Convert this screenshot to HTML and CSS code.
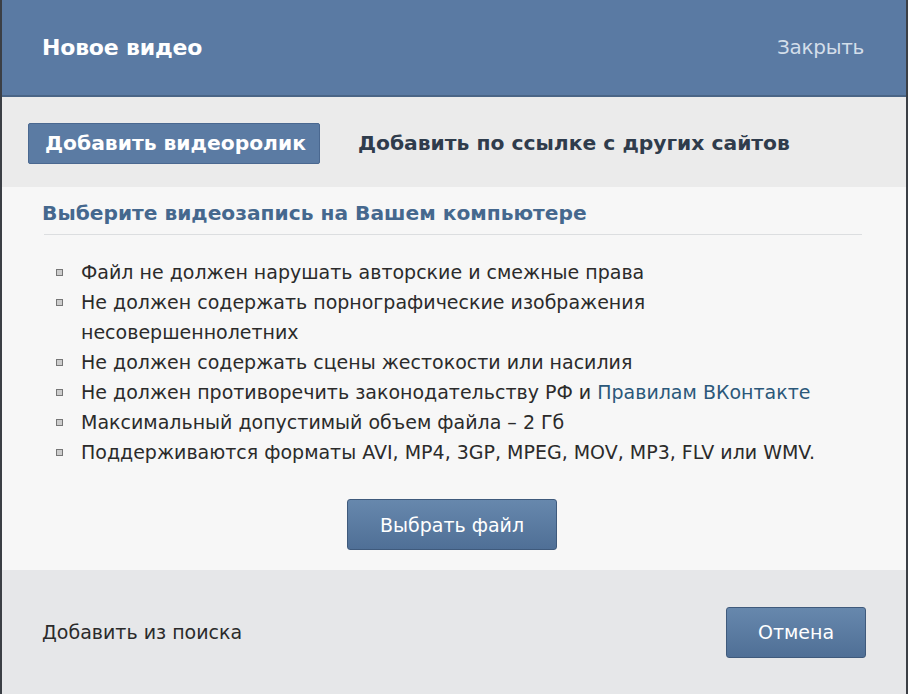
FILE: index.html
```html
<!DOCTYPE html>
<html lang="ru">
<head>
  <meta charset="UTF-8">
  <title>Новое видео</title>
  <link rel="stylesheet" href="styles.css">
</head>
<body>
  <div class="box">
    <div class="box-header">
      <span class="box-title">Новое видео</span>
      <span class="box-close">Закрыть</span>
    </div>

    <div class="tabs">
      <span class="tab active">Добавить видеоролик</span>
      <span class="tab">Добавить по ссылке с других сайтов</span>
    </div>

    <div class="box-body">
      <h3 class="section-title">Выберите видеозапись на Вашем компьютере</h3>
      <ul class="rules">
        <li>Файл не должен нарушать авторские и смежные права</li>
        <li>Не должен содержать порнографические изображения несовершеннолетних</li>
        <li>Не должен содержать сцены жестокости или насилия</li>
        <li>Не должен противоречить законодательству РФ и <a class="link" href="#">Правилам ВКонтакте</a></li>
        <li>Максимальный допустимый объем файла – 2 Гб</li>
        <li>Поддерживаются форматы AVI, MP4, 3GP, MPEG, MOV, MP3, FLV или WMV.</li>
      </ul>
      <div class="upload">
        <button class="button upload-button">Выбрать файл</button>
      </div>
    </div>

    <div class="box-footer">
      <span class="footer-link">Добавить из поиска</span>
      <button class="button cancel-button">Отмена</button>
    </div>
  </div>
</body>
</html>
```

FILE: styles.css
```css
body {
  margin: 0;
  background-color: #fff;
  font-family: "DejaVu Sans", sans-serif;
}

.box {
  width: 904px;
  height: 694px;
  border-left: 2px solid #3b3f45;
  border-right: 2px solid #3b3f45;
  display: flex;
  flex-direction: column;
}

.box-header {
  height: 95px;
  background-color: #5a7aa3;
  border-bottom: 2px solid #4a6586;
  display: flex;
  justify-content: space-between;
  align-items: center;
  padding: 0 42px 0 40px;
}

.box-title {
  color: #fff;
  font-size: 22px;
  font-weight: bold;
  letter-spacing: -0.2px;
}

.box-close {
  color: #d3deea;
  font-size: 20px;
  letter-spacing: -0.3px;
}

.tabs {
  height: 89px;
  background-color: #ebebeb;
  display: flex;
  align-items: center;
  gap: 38px;
  padding: 2px 26px 0;
}

.tab {
  color: #2f3c4c;
  font-size: 20.3px;
  font-weight: bold;
}

.tab.active {
  background-color: #5b7ba3;
  border: 1px solid #4a6890;
  border-radius: 2px;
  color: #fff;
  padding: 7px 13px 8px 16px;
}

.box-body {
  flex: 1;
  background-color: #f7f7f7;
  padding: 14px 44px 20px 42px;
}

.section-title {
  margin: 0;
  padding-bottom: 9px;
  border-bottom: 1px solid #dcdee0;
  color: #45688e;
  font-size: 20.2px;
  font-weight: bold;
  text-indent: -2px;
}

.rules {
  list-style: none;
  margin: 22px 0 0;
  padding: 0 0 0 37px;
}

.rules li {
  position: relative;
  color: #2b2b2b;
  font-size: 19px;
  line-height: 30px;
}

.rules li::before {
  content: '';
  position: absolute;
  left: -25px;
  top: 12px;
  width: 5px;
  height: 5px;
  border: 1px solid #777;
  background-color: #ccc;
}

.link {
  color: #2b587a;
  text-decoration: none;
}

.upload {
  display: flex;
  justify-content: center;
  margin-top: 32px;
  padding-right: 2px;
}

.button {
  background: linear-gradient(#6788ad, #4f6f96);
  border: 1px solid #3f5a7c;
  border-radius: 3px;
  color: #fff;
  font-family: inherit;
  font-size: 19px;
  cursor: pointer;
}

.upload-button {
  width: 210px;
  height: 51px;
}

.box-footer {
  height: 124px;
  background-color: #e6e7e9;
  display: flex;
  justify-content: space-between;
  align-items: center;
  padding: 0 40px 0 40px;
}

.footer-link {
  color: #2b2b2b;
  font-size: 19px;
}

.cancel-button {
  width: 140px;
  height: 51px;
}
```
